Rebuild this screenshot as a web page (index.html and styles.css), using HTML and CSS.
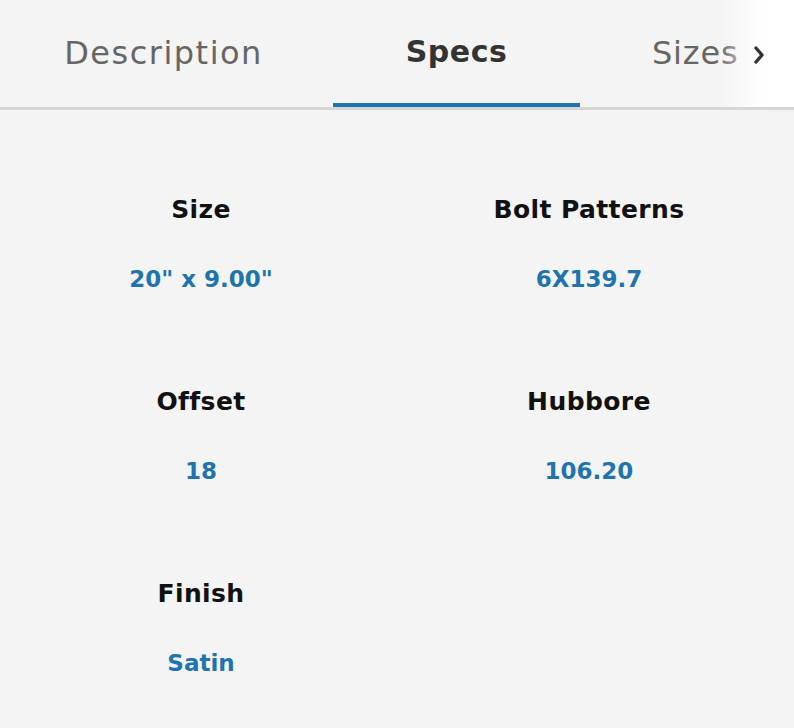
FILE: index.html
```html
<!DOCTYPE html>
<html lang="en">
<head>
    <meta charset="UTF-8">
    <meta name="viewport" content="width=device-width, initial-scale=1.0">
    <title>Wheel Specs</title>
    <link rel="stylesheet" href="styles.css">
</head>
<body>
    <div class="tabs-wrap">
        <nav class="tabs">
            <a href="#" class="tab">Description</a>
            <a href="#" class="tab active">Specs</a>
            <a href="#" class="tab tab-last">Sizes</a>
        </nav>
        <div class="tabs-fade">
            <svg class="chevron" width="14" height="20" viewBox="0 0 14 20">
                <polyline points="3,3 9,10 3,17" fill="none" stroke="#333" stroke-width="3.4" stroke-linecap="round" stroke-linejoin="round"/>
            </svg>
        </div>
    </div>
    <main class="specs">
        <div class="spec">
            <h3>Size</h3>
            <p>20" x 9.00"</p>
        </div>
        <div class="spec">
            <h3>Bolt Patterns</h3>
            <p>6X139.7</p>
        </div>
        <div class="spec">
            <h3>Offset</h3>
            <p>18</p>
        </div>
        <div class="spec">
            <h3>Hubbore</h3>
            <p>106.20</p>
        </div>
        <div class="spec">
            <h3>Finish</h3>
            <p>Satin</p>
        </div>
    </main>
</body>
</html>
```

FILE: styles.css
```css
body {
    font-family: "DejaVu Sans", "Liberation Sans", sans-serif;
    margin: 0;
    padding: 0;
    background-color: #f4f4f4;
    width: 794px;
    height: 728px;
    overflow: hidden;
}
.tabs-wrap {
    position: relative;
    border-bottom: 3px solid #d6d6d6;
    overflow: hidden;
}
.tabs {
    display: flex;
    gap: 46px;
    padding-left: 40px;
    height: 107px;
}
.tab {
    width: 247px;
    flex-shrink: 0;
    box-sizing: border-box;
    display: flex;
    align-items: center;
    justify-content: center;
    padding-bottom: 2px;
    font-size: 32px;
    letter-spacing: 1.5px;
    color: #666;
    text-decoration: none;
}
.tab.active {
    color: #333;
    font-weight: 700;
    font-size: 30px;
    letter-spacing: 0.5px;
    border-bottom: 4px solid #1f73ad;
    padding-bottom: 0;
}
.tab-last {
    justify-content: flex-start;
    padding-left: 26px;
    letter-spacing: 0.8px;
}
/* fade the overflowing tab into the scroll arrow */
.tabs-fade {
    position: absolute;
    top: 0;
    right: 0;
    bottom: 0;
    width: 94px;
    background: linear-gradient(to right, rgba(255, 255, 255, 0) 20%, #fff 68%);
}
.chevron {
    position: absolute;
    left: 53px;
    top: 45px;
}
.specs {
    display: grid;
    grid-template-columns: 388px 388px;
    padding: 82px 0 0 7px;
    row-gap: 90px;
}
.spec {
    text-align: center;
}
.spec h3 {
    margin: 0;
    font-size: 25px;
    font-weight: 700;
    letter-spacing: 0.4px;
    color: #111;
    line-height: 36px;
}
.spec p {
    margin: 36px 0 0;
    font-size: 23px;
    font-weight: 700;
    color: #1f74b0;
    line-height: 30px;
}
```
